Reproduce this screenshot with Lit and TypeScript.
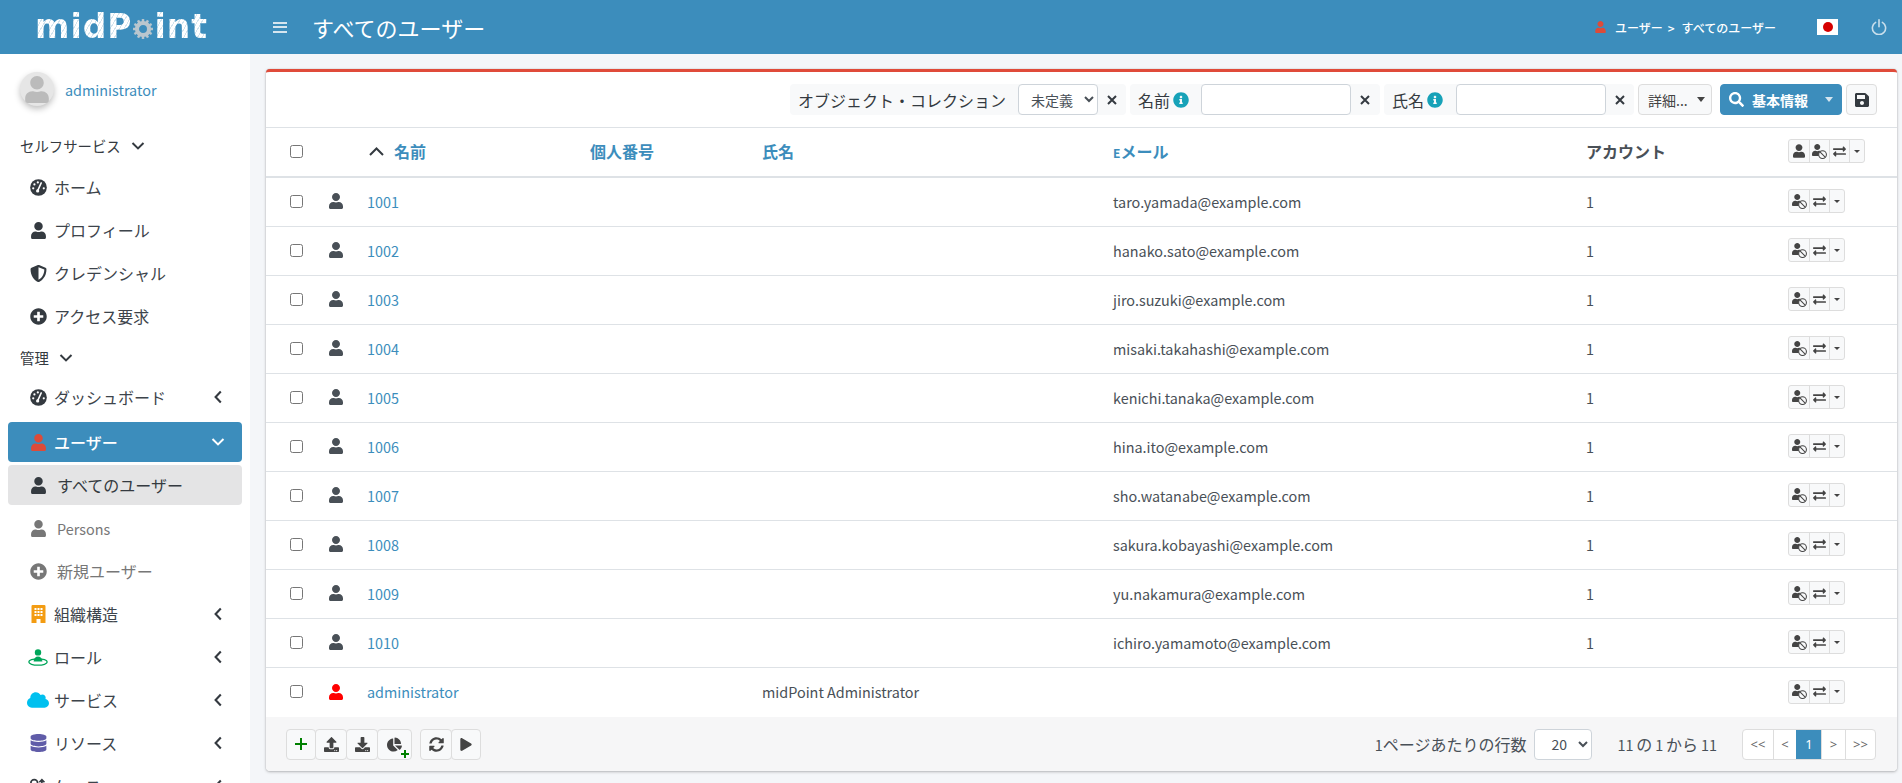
import { LitElement, html, css, svg } from 'lit'
import { customElement } from 'lit/decorators.js'

const USER = 'M224 256c70.7 0 128-57.3 128-128S294.7 0 224 0 96 57.3 96 128s57.3 128 128 128zm89.6 32h-16.7c-22.2 10.2-46.9 16-72.9 16s-50.6-5.8-72.9-16h-16.7C60.2 288 0 348.2 0 422.4V464c0 26.5 21.5 48 48 48h352c26.5 0 48-21.5 48-48v-41.6c0-74.2-60.2-134.4-134.4-134.4z'
const PLUS_CIRCLE = 'M256 8C119 8 8 119 8 256s111 248 248 248 248-111 248-248S393 8 256 8zm144 276c0 6.6-5.4 12-12 12h-92v92c0 6.6-5.4 12-12 12h-56c-6.6 0-12-5.4-12-12v-92h-92c-6.6 0-12-5.4-12-12v-56c0-6.6 5.4-12 12-12h92v-92c0-6.6 5.4-12 12-12h56c6.6 0 12 5.4 12 12v92h92c6.6 0 12 5.4 12 12v56z'
const SHIELD = 'M466.5 83.7l-192-80a48.15 48.15 0 0 0-36.9 0l-192 80C27.7 91.1 16 108.6 16 128c0 198.5 114.5 335.7 221.5 380.3 11.8 4.9 25.1 4.9 36.9 0C360.1 472.6 496 349.3 496 128c0-19.4-11.7-36.9-29.5-44.3zM256.1 446.3l-.1-381 175.9 73.3c-3.3 151.4-82.1 261.1-175.8 307.7z'
const CLOUD = 'M537.6 226.6c4.1-10.7 6.4-22.4 6.4-34.6 0-53-43-96-96-96-19.7 0-38.1 6-53.3 16.2C367 64.2 315.3 32 256 32c-88.4 0-160 71.6-160 160 0 2.7.1 5.4.2 8.1C40.2 219.8 0 273.2 0 336c0 79.5 64.5 144 144 144h368c70.7 0 128-57.3 128-128 0-61.9-44-113.6-102.4-125.4z'
const DATABASE = 'M448 73.143v45.714C448 159.143 347.667 192 224 192S0 159.143 0 118.857V73.143C0 32.857 100.333 0 224 0s224 32.857 224 73.143zM448 176v102.857C448 319.143 347.667 352 224 352S0 319.143 0 278.857V176c48.125 33.143 136.208 48.572 224 48.572S399.874 209.143 448 176zm0 160v102.857C448 479.143 347.667 512 224 512S0 479.143 0 438.857V336c48.125 33.143 136.208 48.572 224 48.572S399.874 369.143 448 336z'
const SEARCH = 'M505 442.7L405.3 343c-4.5-4.5-10.6-7-17-7H372c27.6-35.3 44-79.7 44-128C416 93.1 322.9 0 208 0S0 93.1 0 208s93.1 208 208 208c48.3 0 92.7-16.4 128-44v16.3c0 6.4 2.5 12.5 7 17l99.7 99.7c9.4 9.4 24.6 9.4 33.9 0l28.3-28.3c9.4-9.4 9.4-24.6.1-34zM208 336c-70.7 0-128-57.2-128-128 0-70.7 57.2-128 128-128 70.7 0 128 57.2 128 128 0 70.7-57.2 128-128 128z'
const SAVE = 'M433.941 129.941l-83.882-83.882A48 48 0 0 0 316.118 32H48C21.49 32 0 53.49 0 80v352c0 26.51 21.49 48 48 48h352c26.51 0 48-21.49 48-48V163.882a48 48 0 0 0-14.059-33.941zM224 416c-35.346 0-64-28.654-64-64 0-35.346 28.654-64 64-64s64 28.654 64 64c0 35.346-28.654 64-64 64zm96-304.52V212c0 6.627-5.373 12-12 12H76c-6.627 0-12-5.373-12-12V108c0-6.627 5.373-12 12-12h228.52c3.183 0 6.235 1.264 8.485 3.515l3.48 3.48A11.996 11.996 0 0 1 320 111.48z'
const UPLOAD = 'M296 384h-80c-13.3 0-24-10.7-24-24V192h-87.7c-17.8 0-26.7-21.5-14.1-34.1L242.3 5.7c7.5-7.5 19.8-7.5 27.3 0l152.2 152.2c12.6 12.6 3.7 34.1-14.1 34.1H320v168c0 13.3-10.7 24-24 24zm216-8v112c0 13.3-10.7 24-24 24H24c-13.3 0-24-10.7-24-24V376c0-13.3 10.7-24 24-24h136v8c0 30.9 25.1 56 56 56h80c30.9 0 56-25.1 56-56v-8h136c13.3 0 24 10.7 24 24zm-124 88c0-11-9-20-20-20s-20 9-20 20 9 20 20 20 20-9 20-20zm64 0c0-11-9-20-20-20s-20 9-20 20 9 20 20 20 20-9 20-20z'
const DOWNLOAD = 'M216 0h80c13.3 0 24 10.7 24 24v168h87.7c17.8 0 26.7 21.5 14.1 34.1L269.7 378.3c-7.5 7.5-19.8 7.5-27.3 0L90.1 226.1c-12.6-12.6-3.7-34.1 14.1-34.1H192V24c0-13.3 10.7-24 24-24zm296 376v112c0 13.3-10.7 24-24 24H24c-13.3 0-24-10.7-24-24V376c0-13.3 10.7-24 24-24h146.7l49 49c20.1 20.1 52.5 20.1 72.6 0l49-49H488c13.3 0 24 10.7 24 24zm-124 88c0-11-9-20-20-20s-20 9-20 20 9 20 20 20 20-9 20-20zm64 0c0-11-9-20-20-20s-20 9-20 20 9 20 20 20 20-9 20-20z'
const PIE = 'M527.79 288H290.5l158.03 158.03c6.04 6.04 15.98 6.53 22.19.68 38.7-36.46 65.32-85.61 73.13-140.86 1.34-9.46-6.51-17.85-16.06-17.85zm-15.83-64.8C503.72 103.74 408.26 8.28 288.8.04 279.68-.59 272 7.1 272 16.24V240h223.77c9.14 0 16.82-7.68 16.19-16.8zM224 288V50.71c0-9.55-8.39-17.4-17.84-16.06C86.99 51.49-4.1 155.6.14 280.37 4.5 408.51 114.83 513.59 243.03 511.98c50.4-.63 96.97-16.87 135.26-44.03 7.9-5.6 8.42-17.23 1.57-24.08L224 288z'
const SYNC = 'M370.72 133.28C339.458 104.008 298.888 87.962 255.848 88c-77.458.068-144.328 53.178-162.791 126.85-1.344 5.363-6.122 9.15-11.651 9.15H24.103c-7.498 0-13.194-6.807-11.807-14.176C33.933 94.924 134.813 8 256 8c66.448 0 126.791 26.136 171.315 68.685L463.03 40.97C478.149 25.851 504 36.559 504 57.941V192c0 13.255-10.745 24-24 24H345.941c-21.382 0-32.09-25.851-16.971-40.971l41.75-41.749zM32 296h134.059c21.382 0 32.09 25.851 16.971 40.971l-41.75 41.75c31.262 29.273 71.835 45.319 114.876 45.28 77.418-.07 144.315-53.144 162.787-126.849 1.344-5.363 6.122-9.15 11.651-9.15h57.304c7.498 0 13.194 6.807 11.807 14.176C478.067 417.076 377.187 504 256 504c-66.448 0-126.791-26.136-171.315-68.685L48.97 471.03C33.851 486.149 8 475.441 8 454.059V320c0-13.255 10.745-24 24-24z'
const PLAY = 'M424.4 214.7L72.4 6.6C43.8-10.3 0 6.1 0 47.9V464c0 37.5 40.7 60.1 72.4 41.3l352-208c31.4-18.5 31.5-64.1 0-82.6z'
const EXCHANGE = 'M0 168v-16c0-13.255 10.745-24 24-24h360V80c0-21.367 25.899-32.042 40.971-16.971l80 80c9.372 9.373 9.372 24.569 0 33.941l-80 80C409.956 272.005 384 261.456 384 240v-48H24c-13.255 0-24-10.745-24-24zm488 152H128v-48c0-21.314-25.862-32.08-40.971-16.971l-80 80c-9.372 9.373-9.372 24.569 0 33.941l80 80C102.057 463.997 128 453.437 128 432v-48h360c13.255 0 24-10.745 24-24v-16c0-13.255-10.745-24-24-24z'
const INFO = 'M256 8C119.043 8 8 119.083 8 256c0 136.997 111.043 248 248 248s248-111.003 248-248C504 119.083 392.957 8 256 8zm0 110c23.196 0 42 18.804 42 42s-18.804 42-42 42-42-18.804-42-42 18.804-42 42-42zm56 254c0 6.627-5.373 12-12 12h-88c-6.627 0-12-5.373-12-12v-24c0-6.627 5.373-12 12-12h12v-64h-12c-6.627 0-12-5.373-12-12v-24c0-6.627 5.373-12 12-12h64c6.627 0 12 5.373 12 12v100h12c6.627 0 12 5.373 12 12v24z'

const fa = (w: number, d: string, cls: string) =>
	html`<svg class="ico ${cls}" viewBox="0 0 ${w} 512"><path fill="currentColor" d=${d}></path></svg>`

const tacho = (cls: string) => html`<svg class="ico ${cls}" viewBox="0 0 20 20">
	<circle cx="10" cy="10" r="9.8" fill="currentColor"></circle>
	<path d="M9.2 13.4L13.2 4.6" stroke="#fff" stroke-width="1.8" stroke-linecap="round"></path>
	<circle cx="9" cy="14" r="1.9" fill="#fff"></circle>
	<circle cx="3.8" cy="11" r="1.3" fill="#fff"></circle>
	<circle cx="5.2" cy="6.4" r="1.3" fill="#fff"></circle>
	<circle cx="9.2" cy="4" r="1.3" fill="#fff"></circle>
	<circle cx="16.2" cy="11" r="1.3" fill="#fff"></circle>
</svg>`

const building = (cls: string) => html`<svg class="ico ${cls}" viewBox="0 0 14 18">
	<path d="M1.2 0h11.6a1.2 1.2 0 0 1 1.2 1.2V18H9v-4H5v4H0V1.2A1.2 1.2 0 0 1 1.2 0z" fill="currentColor"></path>
	${[3, 6, 9].map((y) => [3, 6, 9].map((x) => svg`<rect x=${x} y=${y} width="2" height="2" fill="#fff"></rect>`))}
</svg>`

const roleIcon = (cls: string) => html`<svg class="ico ${cls}" viewBox="0 0 20 17">
	<circle cx="10" cy="3.4" r="3.2" fill="currentColor"></circle>
	<path d="M5.6 12.6c0-3 2-5 4.4-5s4.4 2 4.4 5z" fill="currentColor"></path>
	<ellipse cx="10" cy="13" rx="9.2" ry="3.2" fill="none" stroke="currentColor" stroke-width="1.3"></ellipse>
</svg>`

const keyIcon = (cls: string) => html`<svg class="ico ${cls}" viewBox="0 0 20 18">
	<circle cx="5" cy="5" r="4" fill="none" stroke="currentColor" stroke-width="2"></circle>
	<path d="M14 1v14M11 4l3-3 3 3" fill="none" stroke="currentColor" stroke-width="2"></path>
</svg>`

const userBan = html`<svg class="ico act" viewBox="0 0 640 640">
	<path fill="currentColor" d=${USER}></path>
	<circle cx="450" cy="450" r="165" fill="#f8f9fa" stroke="currentColor" stroke-width="44"></circle>
	<path d="M340 340L560 560" stroke="currentColor" stroke-width="44"></path>
</svg>`

const xIcon = html`<svg class="ico x-i" viewBox="0 0 10 10"><path d="M1 1l8 8M9 1l-8 8" stroke="currentColor" stroke-width="2"></path></svg>`
const chevLeft = html`<svg class="ico chev" viewBox="0 0 10 14"><path d="M7.8 1.5L2.6 7l5.2 5.5" fill="none" stroke="currentColor" stroke-width="2.1"></path></svg>`
const chevDown = html`<svg class="ico chev-d" viewBox="0 0 14 10"><path d="M1.5 2l5.5 5.4L12.5 2" fill="none" stroke="currentColor" stroke-width="2"></path></svg>`

const gear = html`<svg class="gear" viewBox="0 0 32 32">
	<g fill="#b9c6ce">
		${[0, 30, 60, 90, 120, 150, 180, 210, 240, 270, 300, 330].map(
			(a) => svg`<rect x="14.2" y="1.5" width="3.6" height="5" transform="rotate(${a} 16 16)"></rect>`,
		)}
	</g>
	<circle cx="16" cy="16" r="8.8" fill="none" stroke="#b9c6ce" stroke-width="6"></circle>
</svg>`

interface NavItem {
	label: string
	icon: unknown
	kids?: boolean
	state?: string
}

const selfItems: NavItem[] = [
	{ label: 'ホーム', icon: tacho('nav-i') },
	{ label: 'プロフィール', icon: fa(448, USER, 'nav-i') },
	{ label: 'クレデンシャル', icon: fa(512, SHIELD, 'nav-i') },
	{ label: 'アクセス要求', icon: fa(512, PLUS_CIRCLE, 'nav-i') },
]

const adminItems: NavItem[] = [
	{ label: 'ダッシュボード', icon: tacho('nav-i'), kids: true, state: 'dash' },
	{ label: 'ユーザー', icon: fa(448, USER, 'nav-i red'), kids: true, state: 'active' },
	{ label: 'すべてのユーザー', icon: fa(448, USER, 'nav-i'), state: 'sub current' },
	{ label: 'Persons', icon: fa(448, USER, 'nav-i'), state: 'sub muted lat' },
	{ label: '新規ユーザー', icon: fa(512, PLUS_CIRCLE, 'nav-i'), state: 'sub muted' },
	{ label: '組織構造', icon: building('nav-i tall orange'), kids: true },
	{ label: 'ロール', icon: roleIcon('nav-i wide green'), kids: true },
	{ label: 'サービス', icon: fa(640, CLOUD, 'nav-i wider cyan'), kids: true },
	{ label: 'リソース', icon: fa(448, DATABASE, 'nav-i tall purple'), kids: true },
	{ label: 'ケース', icon: keyIcon('nav-i'), kids: true },
]

const users = [
	['1001', 'taro.yamada@example.com'],
	['1002', 'hanako.sato@example.com'],
	['1003', 'jiro.suzuki@example.com'],
	['1004', 'misaki.takahashi@example.com'],
	['1005', 'kenichi.tanaka@example.com'],
	['1006', 'hina.ito@example.com'],
	['1007', 'sho.watanabe@example.com'],
	['1008', 'sakura.kobayashi@example.com'],
	['1009', 'yu.nakamura@example.com'],
	['1010', 'ichiro.yamamoto@example.com'],
]

@customElement('app-root')
export class AppRoot extends LitElement {
	static styles = css`
		:host {
			display: block;
			height: 783px;
			overflow: hidden;
			background: #f4f6f9;
			color: #495057;
			font-family: 'Noto Sans CJK JP', 'Noto Sans', sans-serif;
			font-size: 14px;
		}
		* {
			box-sizing: border-box;
		}
		.ico {
			display: block;
			flex: none;
		}
		.lat {
			font-size: 14.4px;
		}

		/* top bar */
		.topbar {
			height: 54px;
			background: #3c8dbc;
			color: #fff;
			display: flex;
			align-items: center;
		}
		.logo {
			width: 273px;
			padding-left: 35px;
			display: flex;
			align-items: center;
			font-family: 'DejaVu Sans', sans-serif;
			font-weight: 700;
			font-size: 33px;
			letter-spacing: 1px;
			line-height: 54px;
		}
		.logo span {
			background: repeating-linear-gradient(120deg, #fff 0 3px, #d3e4ee 3px 4px);
			-webkit-background-clip: text;
			background-clip: text;
			color: transparent;
		}
		.gear {
			width: 22px;
			height: 22px;
			margin: 3px 1px 0 -1px;
		}
		.burger {
			width: 14px;
			height: 11px;
			border-top: 2px solid #d5e5ef;
			border-bottom: 2px solid #d5e5ef;
			margin-right: 25px;
		}
		.burger::after {
			content: '';
			display: block;
			height: 2px;
			margin-top: 2.5px;
			background: #d5e5ef;
		}
		.title {
			font-size: 22px;
			flex: 1;
		}
		.crumbs {
			display: flex;
			align-items: center;
			font-size: 12px;
			font-weight: 500;
		}
		.crumb-i {
			width: 11px;
			height: 12px;
			color: #dd4b39;
			margin-right: 9px;
		}
		.crumb-sep {
			margin: 0 7px 0 5px;
		}
		.flag {
			width: 21px;
			height: 16px;
			background: #fff;
			margin-left: 41px;
			display: flex;
			align-items: center;
			justify-content: center;
		}
		.flag i {
			width: 10px;
			height: 10px;
			border-radius: 50%;
			background: #d60000;
		}
		.power {
			width: 16px;
			height: 16px;
			margin: 0 15px 0 33px;
			color: #c9dfec;
		}

		.body {
			display: flex;
			height: 729px;
		}

		/* sidebar */
		.side {
			width: 250px;
			flex: none;
			background: #fff;
			overflow: hidden;
		}
		.who {
			height: 73px;
			padding: 0 0 3px 20px;
			display: flex;
			align-items: center;
			gap: 11px;
		}
		.avatar {
			width: 34px;
			height: 34px;
			border-radius: 50%;
			background: #e6e6e6;
			box-shadow: 0 3px 6px rgba(0, 0, 0, 0.25);
			color: #bbb;
			display: flex;
			align-items: center;
			justify-content: center;
		}
		.avatar-i {
			width: 24px;
			height: 27px;
		}
		.who a {
			color: #3c8dbc;
			font-size: 14.4px;
		}
		.section {
			display: flex;
			align-items: center;
			gap: 10px;
			height: 37px;
			padding-left: 20px;
			font-size: 14.4px;
			color: #343a40;
		}
		.section.second {
			height: 37px;
		}
		.chev-d {
			width: 14px;
			height: 10px;
		}
		.item {
			display: flex;
			align-items: center;
			height: 40px;
			margin: 3px 8px;
			padding-right: 19px;
			border-radius: 4px;
			font-size: 16px;
			color: #3d444b;
		}
		.item.dash {
			margin-top: 1px;
			margin-bottom: 5px;
		}
		.icon-box {
			width: 46px;
			display: flex;
			justify-content: center;
			padding: 0 5px 0 20px;
			flex: none;
		}
		.nav-i {
			width: 17px;
			height: 17px;
			color: #343a40;
		}
		.nav-i.tall {
			height: 18px;
		}
		.nav-i.wide {
			width: 20px;
			margin-left: -1px;
		}
		.nav-i.wider {
			width: 22px;
			height: 20px;
			margin-left: -2px;
		}
		.label {
			flex: 1;
			white-space: nowrap;
		}
		.chev {
			width: 10px;
			height: 14px;
			color: #343a40;
		}
		.item.active {
			background: #3c8dbc;
			color: #fff;
			font-weight: 500;
		}
		.item.active .chev-d {
			color: #fff;
			margin-right: -2px;
		}
		.item.sub .label {
			padding-left: 3px;
		}
		.item.lat .label {
			font-size: 14.4px;
		}
		.item.current {
			background: #e4e4e5;
			color: #343a40;
		}
		.item.muted {
			color: #777;
		}
		.item.muted .nav-i {
			color: #777;
		}
		.red {
			color: #dd4b39 !important;
		}
		.orange {
			color: #f39c12;
		}
		.green {
			color: #00a65a;
		}
		.cyan {
			color: #00c0ef;
		}
		.purple {
			color: #605ca8;
		}

		/* card */
		.main {
			flex: 1;
			padding: 15px 5px 0 16px;
		}
		.card {
			height: 702px;
			background: #fff;
			border-top: 3px solid #e04b3a;
			border-radius: 4px;
			box-shadow: 0 0 1px rgba(0, 0, 0, 0.3), 0 1px 3px rgba(0, 0, 0, 0.25);
			display: flex;
			flex-direction: column;
			overflow: hidden;
		}
		.filters {
			height: 56px;
			flex: none;
			padding: 12px 20px 0 0;
			border-bottom: 1px solid #dee2e6;
			display: flex;
			justify-content: flex-end;
			align-items: flex-start;
			font-size: 16px;
			color: #343a40;
		}
		.fgroup {
			display: flex;
			align-items: center;
			height: 31px;
			background: #f8f9fa;
			border-radius: 4px;
			padding-left: 8px;
			margin-right: 4px;
		}
		.info {
			width: 16px;
			height: 16px;
			color: #17a2b8;
			margin-left: 3px;
		}
		.fgroup select {
			width: 80px;
			margin-left: 12px;
		}
		.fgroup input {
			width: 150px;
			height: 31px;
			margin-left: 12px;
			border: 1px solid #ced4da;
			border-radius: 4px;
			background: #fff;
		}
		.fgroup.last input {
			margin-left: 13px;
		}
		select {
			height: 31px;
			border: 1px solid #ced4da;
			border-radius: 4px;
			background: #fff;
			color: #495057;
			font: inherit;
			font-size: 14px;
			padding-left: 8px;
		}
		.x {
			width: 28px;
			display: flex;
			justify-content: center;
			color: #343a40;
		}
		.x-i {
			width: 10px;
			height: 10px;
		}
		.fgroup input + .x {
			width: 29px;
		}
		.fgroup.last input + .x {
			width: 28px;
		}
		.btn {
			height: 31px;
			display: flex;
			align-items: center;
			background: #f8f9fa;
			border: 1px solid #ddd;
			border-radius: 4px;
			font-size: 14px;
			color: #444;
		}
		.more {
			width: 74px;
			padding-left: 9px;
			gap: 9px;
			margin-right: 8px;
		}
		.caret {
			width: 0;
			height: 0;
			border-left: 4.5px solid transparent;
			border-right: 4.5px solid transparent;
			border-top: 5px solid currentColor;
		}
		.basic {
			width: 122px;
			background: #3c8dbc;
			border-color: #3c8dbc;
			color: #fff;
			font-weight: 700;
			padding-left: 8px;
			margin-right: 4px;
		}
		.basic .ico {
			width: 15px;
			height: 15px;
			margin-right: 8px;
		}
		.basic .caret {
			margin-left: 17px;
			border-top-color: #d5e5ef;
		}
		.save {
			width: 31px;
			justify-content: center;
			color: #343a40;
		}
		.save .ico {
			width: 14px;
			height: 16px;
		}

		/* table */
		.row {
			display: grid;
			grid-template-columns: 52px 49px 223px 172px 351px 473px 201px 1fr;
			align-items: center;
			font-size: 14.4px;
		}
		.row.head {
			height: 50px;
			flex: none;
			padding-bottom: 2px;
			border-bottom: 2px solid #dee2e6;
			font-size: 16px;
			font-weight: 700;
			color: #495057;
		}
		.row.head a {
			color: #3c8dbc;
		}
		.mail-e {
			font-size: 12px;
		}
		.rows .row {
			height: 49px;
			padding-bottom: 2px;
			border-bottom: 1px solid #dee2e6;
		}
		.rows .row:last-child {
			border-bottom: 0;
		}
		.rows {
			flex: 1;
		}
		.cb {
			width: 13px;
			height: 13px;
			margin-left: 24px;
			border: 1px solid #767676;
			border-radius: 2.5px;
			background: #fff;
		}
		.row-i {
			width: 14px;
			height: 16px;
			margin-left: 11px;
			color: #495057;
		}
		.row-i.admin {
			color: #f00;
		}
		.sort-cell {
			display: flex;
			align-items: center;
			gap: 10px;
			padding-left: 2px;
		}
		.sort-i {
			width: 15px;
			height: 9px;
			color: #343a40;
		}
		.row a {
			color: #3c8dbc;
		}
		.acts {
			display: flex;
			width: max-content;
			height: 24px;
			margin-left: 1px;
			background: #f8f9fa;
			border: 1px solid #ddd;
			border-radius: 3px;
			color: #444;
		}
		.acts div {
			height: 22px;
			width: 20px;
			display: flex;
			align-items: center;
			justify-content: center;
			border-left: 1px solid #ddd;
		}
		.acts div:first-child {
			border-left: 0;
		}
		.acts div.drop {
			width: 15px;
		}
		.acts .caret {
			border-left-width: 3px;
			border-right-width: 3px;
			border-top-width: 3px;
		}
		.act {
			width: 15px;
			height: 15px;
		}
		.act-u {
			width: 12px;
			height: 14px;
		}
		.act-x {
			width: 13px;
			height: 13px;
		}

		/* footer */
		.foot {
			height: 55px;
			flex: none;
			background: #f6f6f7;
			display: flex;
			align-items: center;
			padding: 0 21px 1px 20px;
			font-size: 16px;
			color: #495057;
		}
		.tools {
			display: flex;
			flex: 1;
		}
		.tools .btn {
			justify-content: center;
			color: #444;
			margin-right: -1px;
		}
		.w30 {
			width: 30px;
		}
		.w32 {
			width: 32px;
		}
		.w34 {
			width: 35px;
		}
		.tools .tgap {
			margin-left: 9px;
		}
		.tool-i {
			width: 15px;
			height: 15px;
		}
		.tool-play {
			width: 12px;
			height: 13px;
		}
		.tool-plus {
			width: 12px;
			height: 12px;
			position: relative;
		}
		.tool-plus::before,
		.tool-plus::after {
			content: '';
			position: absolute;
			background: #008000;
		}
		.tool-plus::before {
			left: 5px;
			top: 0;
			width: 2px;
			height: 12px;
		}
		.tool-plus::after {
			left: 0;
			top: 5px;
			width: 12px;
			height: 2px;
		}
		.pie-wrap {
			position: relative;
		}
		.pie-wrap .tool-plus {
			position: absolute;
			right: 2px;
			bottom: 1px;
			width: 8px;
			height: 8px;
		}
		.pie-wrap .tool-plus::before {
			left: 3px;
			height: 8px;
		}
		.pie-wrap .tool-plus::after {
			top: 3px;
			width: 8px;
		}
		.psize {
			width: 58px;
			margin: 0 25px 0 8px;
			padding-left: 12px;
		}
		.range {
			margin-right: 25px;
			word-spacing: -0.7px;
		}
		.pager {
			display: flex;
			height: 31px;
			background: #fff;
			border: 1px solid #ddd;
			border-radius: 4px;
			overflow: hidden;
			font-size: 13px;
			color: #666;
		}
		.pager div {
			display: flex;
			align-items: center;
			justify-content: center;
			border-left: 1px solid #ddd;
			font-family: 'Noto Sans', sans-serif;
		}
		.pager div:first-child {
			border-left: 0;
		}
		.pager .on {
			background: #3c8dbc;
			border-left-color: #3c8dbc;
			color: #fff;
		}
		.p30 {
			width: 30px;
		}
		.p24 {
			width: 24px;
		}
		.p23 {
			width: 23px;
		}
		.p25 {
			width: 25px;
		}
	`

	private navItem(it: NavItem) {
		const active = it.state === 'active'
		return html`<div class="item ${it.state ?? ''}">
			<div class="icon-box">${it.icon}</div>
			<div class="label">${it.label}</div>
			${active ? chevDown : it.kids ? chevLeft : ''}
		</div>`
	}

	private actions(withUser: boolean) {
		return html`<div class="acts">
			${withUser ? html`<div>${fa(448, USER, 'act-u')}</div>` : ''}
			<div>${userBan}</div>
			<div>${fa(512, EXCHANGE, 'act-x')}</div>
			<div class="drop"><span class="caret"></span></div>
		</div>`
	}

	private row(name: string, full: string, mail: string, admin = false) {
		return html`<div class="row">
			<div class="cb"></div>
			${fa(448, USER, admin ? 'row-i admin' : 'row-i')}
			<a>${name}</a>
			<div></div>
			<div>${full}</div>
			<div>${mail}</div>
			<div>${admin ? '' : '1'}</div>
			${this.actions(false)}
		</div>`
	}

	render() {
		return html`
			<div class="topbar">
				<div class="logo"><span>midP</span>${gear}<span>int</span></div>
				<div class="burger"></div>
				<div class="title">すべてのユーザー</div>
				<div class="crumbs">
					${fa(448, USER, 'crumb-i')}
					<span>ユーザー</span><span class="crumb-sep">&gt;</span><span>すべてのユーザー</span>
				</div>
				<div class="flag"><i></i></div>
				<svg class="ico power" viewBox="0 0 16 16">
					<path d="M4.6 3.4a6.6 6.6 0 1 0 6.8 0M8 .8v7" fill="none" stroke="currentColor" stroke-width="1.6" stroke-linecap="round"></path>
				</svg>
			</div>
			<div class="body">
				<nav class="side">
					<div class="who">
						<div class="avatar">${fa(448, USER, 'avatar-i')}</div>
						<a>administrator</a>
					</div>
					<div class="section">セルフサービス ${chevDown}</div>
					${selfItems.map((i) => this.navItem(i))}
					<div class="section second">管理 ${chevDown}</div>
					${adminItems.map((i) => this.navItem(i))}
				</nav>
				<main class="main">
					<section class="card">
						<div class="filters">
							<div class="fgroup">
								<span>オブジェクト・コレクション</span>
								<select><option>未定義</option></select>
								<span class="x">${xIcon}</span>
							</div>
							<div class="fgroup">
								<span>名前</span>${fa(512, INFO, 'info')}
								<input />
								<span class="x">${xIcon}</span>
							</div>
							<div class="fgroup last">
								<span>氏名</span>${fa(512, INFO, 'info')}
								<input />
								<span class="x">${xIcon}</span>
							</div>
							<div class="btn more">詳細... <span class="caret"></span></div>
							<div class="btn basic">${fa(512, SEARCH, '')}基本情報<span class="caret"></span></div>
							<div class="btn save">${fa(448, SAVE, '')}</div>
						</div>
						<div class="row head">
							<div class="cb"></div>
							<div></div>
							<div class="sort-cell">
								<svg class="ico sort-i" viewBox="0 0 15 9"><path d="M1 8l6.5-6.5L14 8" fill="none" stroke="currentColor" stroke-width="2"></path></svg>
								<a>名前</a>
							</div>
							<a>個人番号</a>
							<a>氏名</a>
							<a><span class="mail-e">E</span>メール</a>
							<div>アカウント</div>
							${this.actions(true)}
						</div>
						<div class="rows">
							${users.map(([n, m]) => this.row(n, '', m))}
							${this.row('administrator', 'midPoint Administrator', '', true)}
						</div>
						<div class="foot">
							<div class="tools">
								<div class="btn w30"><span class="tool-plus"></span></div>
								<div class="btn w32">${fa(512, UPLOAD, 'tool-i')}</div>
								<div class="btn w32">${fa(512, DOWNLOAD, 'tool-i')}</div>
								<div class="btn w34 pie-wrap">${fa(544, PIE, 'tool-i')}<span class="tool-plus"></span></div>
								<div class="btn w32 tgap">${fa(512, SYNC, 'tool-i')}</div>
								<div class="btn w30">${fa(448, PLAY, 'tool-play')}</div>
							</div>
							<span><span class="lat">1</span>ページあたりの行数</span>
							<select class="psize"><option>20</option></select>
							<span class="range"><span class="lat">11</span> の <span class="lat">1</span> から <span class="lat">11</span></span>
							<div class="pager">
								<div class="p30">&lt;&lt;</div>
								<div class="p23">&lt;</div>
								<div class="p25 on">1</div>
								<div class="p24">&gt;</div>
								<div class="p30">&gt;&gt;</div>
							</div>
						</div>
					</section>
				</main>
			</div>
		`
	}
}
